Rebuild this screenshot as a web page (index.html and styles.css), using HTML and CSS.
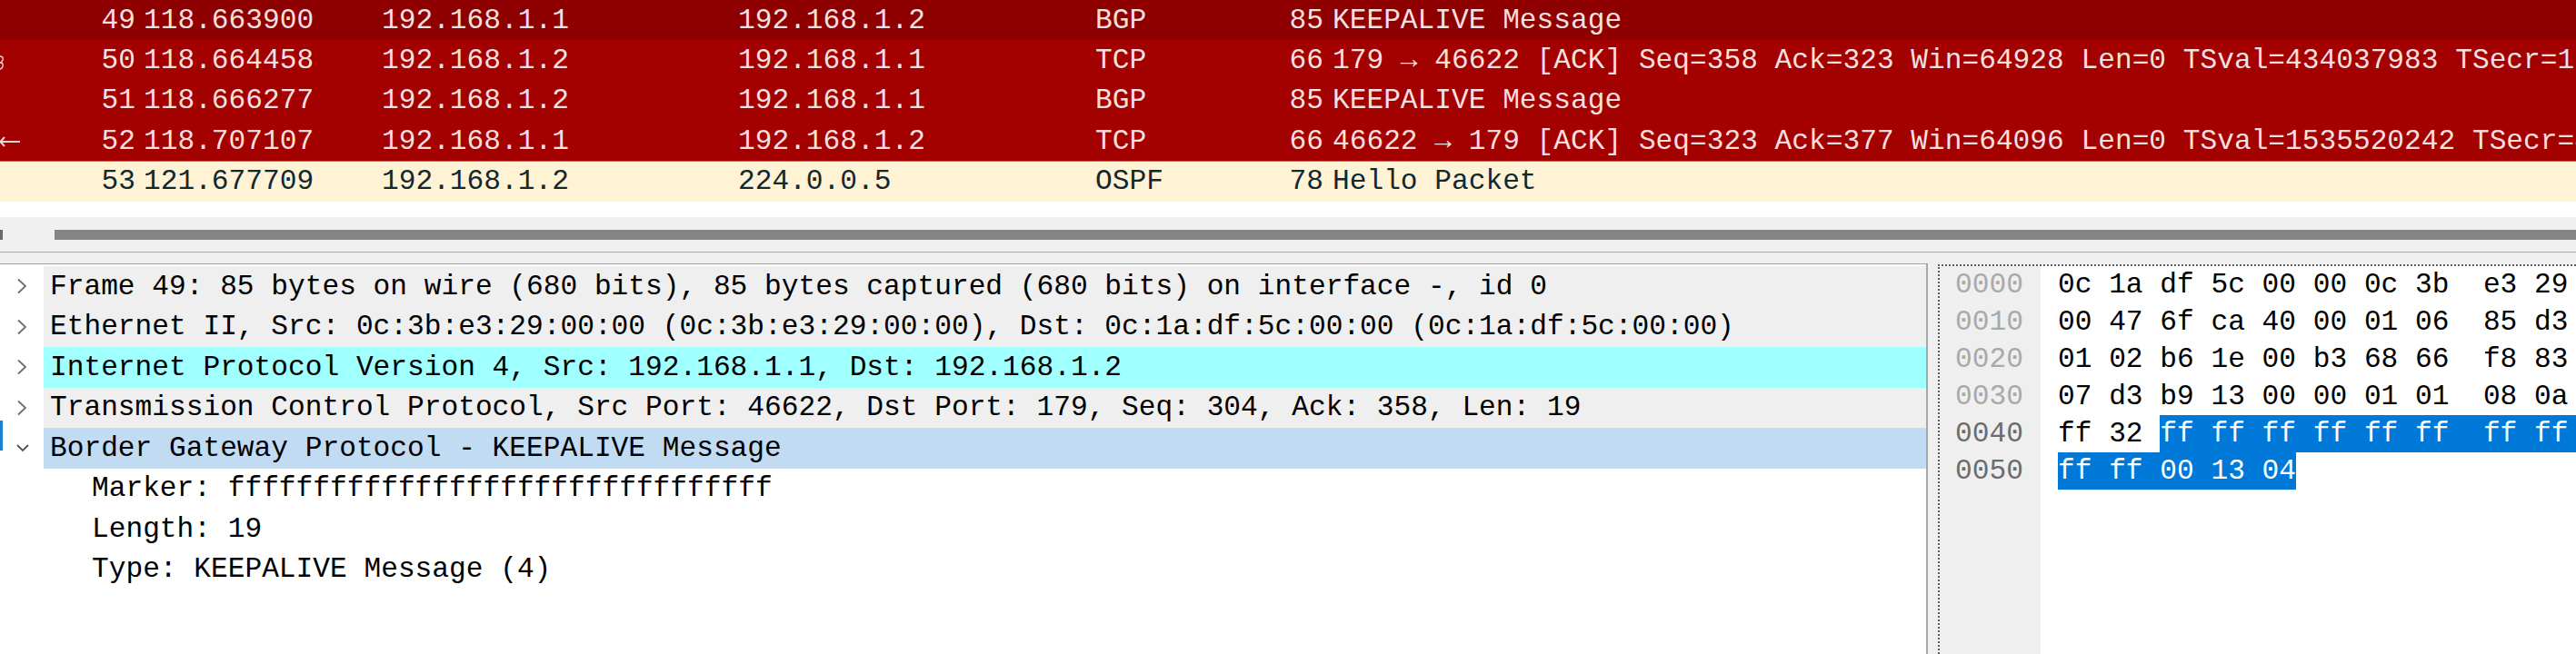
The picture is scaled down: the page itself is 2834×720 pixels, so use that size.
FILE: index.html
```html
<!DOCTYPE html>
<html>
<head>
<meta charset="utf-8">
<link rel="stylesheet" href="styles.css">
</head>
<body>
<div class="plist">
  <div class="prow cur"><span class="c-no">49</span><span class="c-time">118.663900</span><span>192.168.1.1</span><span>192.168.1.2</span><span>BGP</span><span class="c-len">85</span><span class="c-info">KEEPALIVE Message</span></div>
  <div class="prow red"><span class="c-no">50</span><span class="c-time">118.664458</span><span>192.168.1.2</span><span>192.168.1.1</span><span>TCP</span><span class="c-len">66</span><span class="c-info">179 → 46622 [ACK] Seq=358 Ack=323 Win=64928 Len=0 TSval=434037983 TSecr=1535520242</span></div>
  <div class="prow red"><span class="c-no">51</span><span class="c-time">118.666277</span><span>192.168.1.2</span><span>192.168.1.1</span><span>BGP</span><span class="c-len">85</span><span class="c-info">KEEPALIVE Message</span></div>
  <div class="prow red last"><span class="c-no">52</span><span class="c-time">118.707107</span><span>192.168.1.1</span><span>192.168.1.2</span><span>TCP</span><span class="c-len">66</span><span class="c-info">46622 → 179 [ACK] Seq=323 Ack=377 Win=64096 Len=0 TSval=1535520242 TSecr=434037983</span></div>
  <div class="prow ospf"><span class="c-no">53</span><span class="c-time">121.677709</span><span>192.168.1.2</span><span>224.0.0.5</span><span>OSPF</span><span class="c-len">78</span><span class="c-info">Hello Packet</span></div>
  <svg class="related" width="24" height="170" viewBox="0 0 24 170">
    <path d="M0 62 Q4 62 3 66 Q2 69 0 69 M0 69 Q4 69 3 73 Q2 76 0 76" fill="none" stroke="#f3d6d6" stroke-width="1.4"/>
    <path d="M0.5 156 H22 M5 151 L0.5 156 L5 161" fill="none" stroke="#f3d6d6" stroke-width="2"/>
  </svg>
</div>
<div class="hscroll"><div class="hs-left"></div><div class="hs-thumb"></div></div>
<div class="sep"></div>
<div class="detail">
  <div class="tree">
    <div class="trow g"><div class="gut"><svg width="12" height="18" viewBox="0 0 12 18"><polyline points="2,1.5 10,9 2,16.5" fill="none" stroke="#6e6e6e" stroke-width="1.8"/></svg></div><div class="lbl">Frame 49: 85 bytes on wire (680 bits), 85 bytes captured (680 bits) on interface -, id 0</div></div>
    <div class="trow g"><div class="gut"><svg width="12" height="18" viewBox="0 0 12 18"><polyline points="2,1.5 10,9 2,16.5" fill="none" stroke="#6e6e6e" stroke-width="1.8"/></svg></div><div class="lbl">Ethernet II, Src: 0c:3b:e3:29:00:00 (0c:3b:e3:29:00:00), Dst: 0c:1a:df:5c:00:00 (0c:1a:df:5c:00:00)</div></div>
    <div class="trow ip"><div class="gut"><svg width="12" height="18" viewBox="0 0 12 18"><polyline points="2,1.5 10,9 2,16.5" fill="none" stroke="#6e6e6e" stroke-width="1.8"/></svg></div><div class="lbl">Internet Protocol Version 4, Src: 192.168.1.1, Dst: 192.168.1.2</div></div>
    <div class="trow g"><div class="gut"><svg width="12" height="18" viewBox="0 0 12 18"><polyline points="2,1.5 10,9 2,16.5" fill="none" stroke="#6e6e6e" stroke-width="1.8"/></svg></div><div class="lbl">Transmission Control Protocol, Src Port: 46622, Dst Port: 179, Seq: 304, Ack: 358, Len: 19</div></div>
    <div class="trow bgp"><div class="gut"><svg width="14" height="10" viewBox="0 0 14 10"><polyline points="1,2 7,8 13,2" fill="none" stroke="#555" stroke-width="1.8"/></svg></div><div class="lbl">Border Gateway Protocol - KEEPALIVE Message</div></div>
    <div class="trow leaf"><div class="gut"></div><div class="lbl">Marker: ffffffffffffffffffffffffffffffff</div></div>
    <div class="trow leaf"><div class="gut"></div><div class="lbl">Length: 19</div></div>
    <div class="trow leaf"><div class="gut"></div><div class="lbl">Type: KEEPALIVE Message (4)</div></div>
  </div>
  <div class="hex">
    <div class="offs">
      <div class="off">0000</div>
      <div class="off">0010</div>
      <div class="off">0020</div>
      <div class="off">0030</div>
      <div class="off on">0040</div>
      <div class="off on">0050</div>
    </div>
    <div class="bytes">
      <div class="hl">0c 1a df 5c 00 00 0c 3b  e3 29 00 00 08 00 45 c0</div>
      <div class="hl">00 47 6f ca 40 00 01 06  85 d3 c0 a8 01 01 c0 a8</div>
      <div class="hl">01 02 b6 1e 00 b3 68 66  f8 83 ca 5f 6c 0b 80 18</div>
      <div class="hl">07 d3 b9 13 00 00 01 01  08 0a 5b 86 ad 32 19 de</div>
      <div class="hl">ff 32 <span class="sel">ff ff ff ff ff ff  ff ff ff ff ff ff ff ff</span></div>
      <div class="hl"><span class="sel">ff ff 00 13 04</span></div>
    </div>
  </div>
  <div class="edgebar"></div>
</div>
</body>
</html>
```
FILE: styles.css
```css
html, body {
  margin: 0;
  padding: 0;
}
body {
  width: 2834px;
  height: 720px;
  overflow: hidden;
  background: #ffffff;
  font-family: "Liberation Mono", "DejaVu Sans Mono", monospace;
  font-size: 31.2px;
  color: #000;
}

/* packet list */
.plist {
  position: relative;
  height: 239px;
  background: #ffffff;
}
.prow {
  display: grid;
  grid-template-columns: 149px 271px 392px 393px 195px 56px minmax(0, 1fr);
  height: 44.4px;
  align-items: center;
  white-space: pre;
  color: #f6dfdf;
}
.prow.cur { background: #8e0000; }
.prow.red { background: #a30000; }
.prow.last { box-shadow: inset 0 -1px 0 #c86a5e; }
.prow.ospf { background: #fff2d5; color: #13272f; }
.c-no, .c-len { text-align: right; }
.c-time { padding-left: 9px; }
.c-info { padding-left: 10px; overflow: hidden; }
.related {
  position: absolute;
  left: 0;
  top: 0;
}

/* horizontal scrollbar */
.hscroll {
  height: 38px;
  background: #f0f0f0;
  display: flex;
  align-items: center;
}
.hs-left {
  width: 3px;
  height: 11px;
  background: #6a6a6a;
}
.hs-thumb {
  margin-left: 57px;
  flex: 1;
  height: 11px;
  background: #858585;
}
.sep {
  height: 12px;
  border-top: 1px solid #a9a9a9;
  background: #f0f0f0;
}

/* details */
.detail {
  position: relative;
  display: flex;
  height: 430px;
  background: #f0f0f0;
}
.tree {
  width: 2121px;
  flex: none;
  box-sizing: border-box;
  border-top: 1px solid #a0a0a0;
  border-right: 2px solid #a7a7a7;
  background: #ffffff;
  padding-top: 2px;
}
.trow {
  display: flex;
  height: 44.5px;
}
.gut {
  width: 48px;
  flex: none;
  box-sizing: border-box;
  padding-left: 18px;
  display: flex;
  align-items: center;
  background: #ffffff;
}
.lbl {
  flex: 1;
  display: flex;
  align-items: center;
  padding-left: 7px;
  white-space: pre;
  overflow: hidden;
}
.trow.g .lbl { background: #efefef; }
.trow.ip .lbl { background: #a0ffff; }
.trow.bgp .lbl { background: #c1dcf2; }
.trow.leaf .lbl { padding-left: 53px; }

.hex {
  flex: 1;
  margin-left: 11px;
  margin-top: 1px;
  border-top: 2px dotted #5a5a5a;
  border-left: 2px dotted #5a5a5a;
  background: #ffffff;
  display: flex;
  overflow: hidden;
}
.offs {
  width: 111px;
  flex: none;
  box-sizing: border-box;
  padding-left: 17px;
  background: #efefef;
}
.off {
  height: 41px;
  line-height: 41px;
  color: #a9a9a9;
}
.off.on { color: #6c6c6c; }
.bytes {
  padding-left: 19px;
  flex: 1;
  overflow: hidden;
}
.hl {
  height: 41px;
  line-height: 41px;
  white-space: pre;
}
.sel {
  display: inline-block;
  line-height: 41px;
  background: #0078d7;
  color: #ffffff;
}
.edgebar {
  position: absolute;
  left: 0;
  top: 173px;
  width: 3px;
  height: 33px;
  background: #1b7fd6;
}
```
